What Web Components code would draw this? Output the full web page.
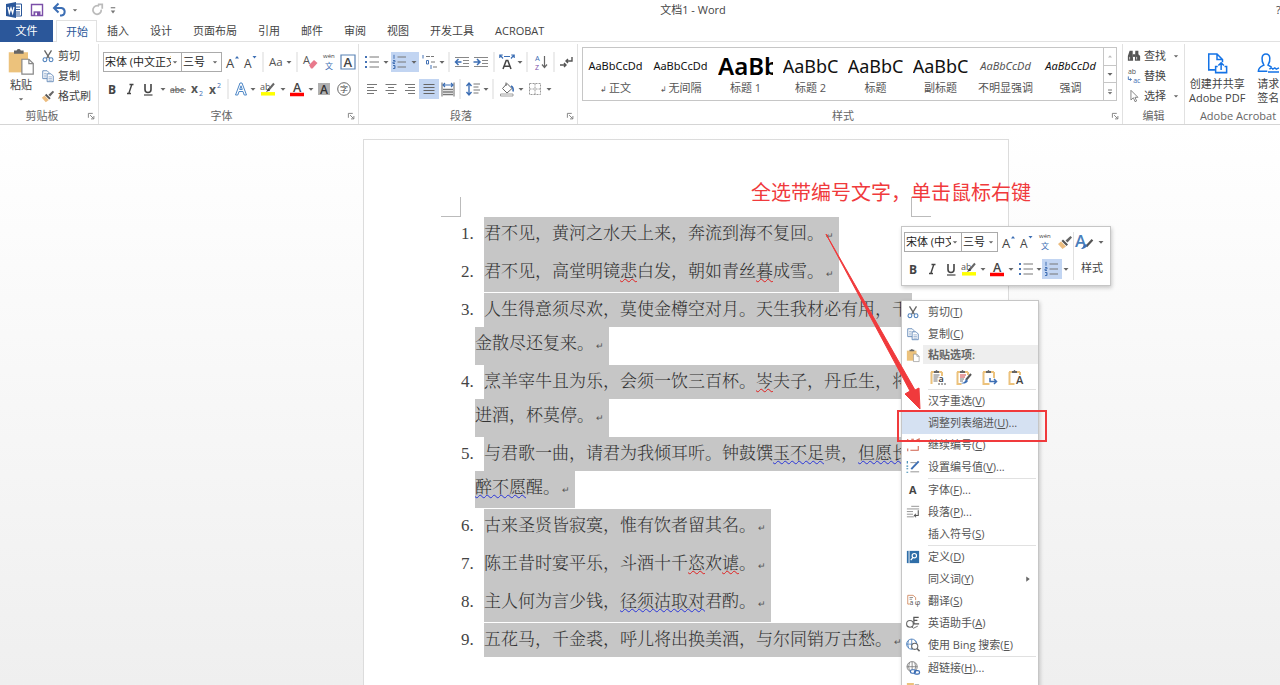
<!DOCTYPE html>
<html lang="zh-CN">
<head>
<meta charset="utf-8">
<title>文档1 - Word</title>
<style>
html,body{margin:0;height:100%}
body{font:11px/16px "Open Sans","Noto Sans CJK SC",sans-serif;color:#444;background:#fff;overflow:hidden}
</style>
</head>
<body>
<word-app></word-app>
<script>
const I={
caret:'<path d="M5.5 7h5L8 9.8z" fill="#666"/>',
sep:'<path d="M8 0v16" stroke="#e1e1e1"/>',
word:'<path d="M8 2h7.5v12H8z" fill="#fff" stroke="#2b579a"/><path d="M9 5h5M9 7.5h5M9 10h5M9 12h5" stroke="#2b579a"/><path d="M0 2l10-2v16L0 14z" fill="#2b579a"/><path d="M2 5l1.3 6L5 6l1.600 5L8 5" fill="none" stroke="#fff" stroke-width="1.300"/>',
save:'<path d="M1.700 1.700h12.600v12.600H1.700z" fill="#fff" stroke="#7b4fa8" stroke-width="1.600"/><path d="M4 9.500h8V14H4z" fill="#7b4fa8"/><path d="M6 11h2v3H6z" fill="#fff"/>',
undo:'<path d="M3 6h6.500a3.800 3.800 0 010 7.500H8" fill="none" stroke="#3c6eb4" stroke-width="2"/><path d="M6.500 1.500L2 6l4.500 4.500" fill="none" stroke="#3c6eb4" stroke-width="2"/>',
redo:'<path d="M10.500 3.500A5 5 0 108 13a5 5 0 004.800-5.500" fill="none" stroke="#bbb" stroke-width="2"/><path d="M9 1.500h5v5" fill="none" stroke="#bbb" stroke-width="2"/>',
more:'<path d="M6 6h4" stroke="#777"/><path d="M6 8.500h4L8 11z" fill="#777"/>',
paste:'<path d="M1 3h11v11.500H1z" fill="#ecc27c"/><path d="M4 3.800V2h1.500a1.300 1.300 0 012.400 0H9.500v1.800z" fill="#666"/><path d="M8.500 7h4l2.500 2.500V15.500H8.500z" fill="#fff" stroke="#888" stroke-width=".7"/><path d="M12.500 7v2.500H15" fill="none" stroke="#888" stroke-width=".7"/>',
cut:'<path d="M4 1.500l5.500 9M12 1.500L6.500 10.500" stroke="#666" stroke-width="1.500" fill="none"/><circle cx="4.500" cy="12.300" r="2.200" fill="none" stroke="#4a7ebb" stroke-width="1.200"/><circle cx="11.500" cy="12.300" r="2.200" fill="none" stroke="#4a7ebb" stroke-width="1.200"/>',
copy:'<path d="M2 2h5l2 2v7H2z" fill="#fff" stroke="#5b83b5"/><path d="M7 5.500h4.500L14 8v6.500H7z" fill="#fff" stroke="#5b83b5"/><path d="M3.500 5h3M3.500 7h2.500M3.500 9h2.500M8.500 9h4M8.500 11h4M8.500 12.800h4" stroke="#8aa5c8" stroke-width=".9"/>',
brush:'<path d="M8.500 6.500L13.500 2l1.500 1.500-4.500 5z" fill="#666"/><path d="M6 5.500l5 5-1.500 1.500-5-5z" fill="#555"/><path d="M4 7.500l5 5L5.500 15 1 10z" fill="#ecbd80"/>',
grow:'<text x="1" y="14" font-size="13" fill="#444">A</text><path d="M10 4.500L12 2l2 2.500z" fill="#3c6eb4"/>',
shrink:'<text x="1" y="14" font-size="12" fill="#444">A</text><path d="M9.500 2h4l-2 2.500z" fill="#3c6eb4"/>',
aa:'<text x="0" y="12" font-size="11.500" fill="#555">Aa</text>',
eraser:'<text x="0" y="10" font-size="11" fill="#555">A</text><path d="M6 11l5-5 3.500 3-5 5.500H8z" fill="#e8798c"/>',
wen:'<text x="2" y="4" font-size="6" fill="#444">wén</text><text x="4" y="15" font-size="8" fill="#3c6eb4">文</text>',
abox:'<path d="M1 1h14v14H1z" fill="none" stroke="#5b83b5" stroke-width="1.200"/><text x="3.500" y="13" font-size="13" font-weight="600" fill="#444">A</text>',
bold:'<text x="4" y="12.500" font-size="12" font-weight="700" fill="#444">B</text>',
italic:'<path d="M7.500 3.500h4M5 12.500h4M9.800 3.500L6.800 12.500" fill="none" stroke="#444" stroke-width="1.400"/>',
under:'<path d="M5 3v5.500q0 3 3 3t3-3V3" fill="none" stroke="#444" stroke-width="1.600"/><path d="M4 14h8.500" stroke="#444" stroke-width="1.200"/>',
strike:'<text x="0" y="12" font-size="8.500" fill="#555">abc</text><path d="M0 9h16" stroke="#555"/>',
sub:'<text x="2" y="12" font-size="12" font-weight="700" fill="#555">x</text><text x="10" y="15" font-size="7" fill="#3c6eb4">2</text>',
sup:'<text x="2" y="12.500" font-size="12" font-weight="700" fill="#555">x</text><text x="10" y="7" font-size="7" fill="#3c6eb4">2</text>',
effect:'<path d="M2.500 14L7 2h2l4.500 12h-2.300L10 10.500H6L4.800 14zM6.700 8.500h2.600L8 4.800z" fill="#fff" stroke="#4d87c7"/>',
hilite:'<text x="0" y="8.500" font-size="9" fill="#555">ab</text><path d="M14 2.500L8.500 9" stroke="#666" stroke-width="2"/><path d="M8.500 7L6 11l4-1.500z" fill="#444"/><path d="M1 12.800h14" stroke="#ff0" stroke-width="3.500"/>',
color:'<text x="4" y="11" font-size="12.500" font-weight="600" fill="#444">A</text><path d="M1 13.500h14" stroke="#f00" stroke-width="3.500"/>',
shade:'<path d="M2 2h12v12H2z" fill="#b0b0b0"/><text x="4" y="12.500" font-size="12" font-weight="600" fill="#333">A</text>',
circle:'<circle cx="8" cy="8" r="6.300" fill="none" stroke="#666"/><text x="4" y="11" font-size="8" fill="#444">字</text>',
bullets:'<path d="M1 3h2M1 8h2M1 13h2" stroke="#4573b5" stroke-width="2"/><path d="M5.500 3h9.500M5.500 8h9.500M5.500 13h9.500" stroke="#777"/>',
numbers:'<path d="M2 .8v4M1 6.500h2V8H1v1.500h2M1 11.500h2v3H1M2 13h1" fill="none" stroke="#4573b5"/><path d="M5.500 3h8.500M5.500 8h8.500M5.500 13h8.500" stroke="#777"/>',
multi:'<path d="M2 1v3.500M5.500 6.500h2V10h-2zM10 11v4" fill="none" stroke="#4573b5"/><path d="M5 2.500h4M10 2.500h3M10 8h4M12 13h4" stroke="#777"/>',
outdent:'<path d="M1 3.500h14M9 6.500h6M9 9.500h6M1 12.500h14" stroke="#888"/><path d="M7.500 8H2M4.500 5L1.500 8l3 3" fill="none" stroke="#3c6eb4" stroke-width="1.500"/>',
indent:'<path d="M1 3.500h14M9 6.500h6M9 9.500h6M1 12.500h14" stroke="#888"/><path d="M.5 8H6M4 5l3 3-3 3" fill="none" stroke="#3c6eb4" stroke-width="1.500"/>',
asian:'<path d="M4 15L7.200 6.500h1.600L12 15M5.200 12.200h5.600" fill="none" stroke="#444" stroke-width="1.500"/><path d="M1.200 1.200l2.800 3.300M14.800 1.200L12 4.500M.8 4V1h3M15.200 4V1h-3M5 2.500h6" fill="none" stroke="#3c6eb4" stroke-width="1.200"/>',
sort:'<text x="2" y="6.500" font-size="7.500" fill="#3c6eb4">A</text><text x="2" y="16" font-size="7" fill="#7b4fa8">Z</text><path d="M11.500 2v11M9 10.500l2.500 3 2.500-3" fill="none" stroke="#666" stroke-width="1.200"/>',
marks:'<path d="M14 3v4H8M10 5L8 7l2 2M2 11h6M6 9l2 2-2 2" fill="none" stroke="#555" stroke-width="1.400"/>',
left:'<path d="M3 3.500h10M3 6.500h7M3 9.500h10M3 12.500h7" stroke="#777"/>',
center:'<path d="M2.500 3.500h11M5 6.500h6M2.500 9.500h11M5 12.500h6" stroke="#777"/>',
right:'<path d="M3 3.500h10M6 6.500h7M3 9.500h10M6 12.500h7" stroke="#777"/>',
justify:'<path d="M2.500 3.500h11M2.500 6.500h11M2.500 9.500h11M2.500 12.500h11" stroke="#666"/>',
dist:'<path d="M2 1.500v14M14 1.500v14" stroke="#666"/><path d="M3 4h10M5 2L3 4l2 2M11 2l2 2-2 2" fill="none" stroke="#3c6eb4" stroke-width="1.200"/><path d="M3 8.500h10M3 11h10M3 13.500h10" stroke="#777" stroke-width="1.300"/>',
spacing:'<path d="M4 2v12M1.500 5L4 2l2.500 3M1.500 11L4 14l2.500-3" fill="none" stroke="#3c6eb4" stroke-width="1.400"/><path d="M8.500 3h6.500M8.500 6h5M8.500 9h6.500M8.500 12h5" stroke="#777"/>',
bucket:'<path d="M8 2.500l5 5-5 4.500-4.500-4.500z" fill="#fff" stroke="#666"/><path d="M7 5V1.500" stroke="#666"/><path d="M12 5c2 1 2.500 3 2 5.500" fill="none" stroke="#3c6eb4" stroke-width="1.600"/><path d="M1.500 13h12.500v2H1.500z" fill="#fff" stroke="#888" stroke-width=".8"/>',
border:'<path d="M2.500 2.500h11v11h-11zM8 2.500v11M2.500 8h11" fill="none" stroke="#999" stroke-dasharray="2 1"/>',
find:'<path d="M3 2h3.500v4L7 13.500H1V8zM9.500 2H13v4l2 2v5.500H9z" fill="#555"/><path d="M6.500 6h3v3h-3z" fill="#555"/><path d="M3 9v3M11 9v3" stroke="#ddd"/>',
replace:'<text x="1" y="6" font-size="8" fill="#555">ab</text><text x="7" y="16" font-size="8" fill="#3c6eb4">ac</text><path d="M1.500 8.500V12H5M3.500 10.500L5 12l-1.500 1.500" fill="none" stroke="#3c6eb4"/>',
select:'<path d="M4.500 1.500v11l2.800-2.500 1.900 4.500 1.800-.8-1.900-4.200h3.400z" fill="#fff" stroke="#777"/>',
pdf:'<path d="M6.500 13H2V1.500h6L12 5.500v2M8 1.500v4h4" fill="none" stroke="#1473e6" stroke-width="1.100"/><path d="M8.500 10.500H7V15h8v-4.500h-1.500M11 13V8M9 9.800l2-2 2 2" fill="none" stroke="#1473e6" stroke-width="1.100"/>',
sign:'<path d="M7.500 14H1c0-3 2-3.500 4-4.500C3 6.500 3 1.500 6.500 1.500s3.500 5 1.500 8c1 .5 2 1 2.500 1.500" fill="none" stroke="#1473e6" stroke-width="1.100"/><path d="M8 14.500h8M9 12.500l1.500-1 1 1 1.500-1 1 1 2-1" fill="none" stroke="#1473e6"/>',
launch:'<path d="M5 10V5h5" fill="none" stroke="#777"/><path d="M7 7l4 4M11.300 8v3.300H8" fill="none" stroke="#777"/>',
up:'<path d="M6 9.500h4L8 7.300z" fill="#bbb"/>',
drop:'<path d="M6 6h4" stroke="#777"/><path d="M5.800 8h4.400L8 10.500z" fill="#777"/>',
stylea:'<text x="0" y="12" font-size="15" font-weight="600" fill="#4a7ebb">A</text><path d="M15.500 6L10 12" stroke="#555" stroke-width="2"/><path d="M11 10.500c-1 3-3 4-6 3.500 2-.5 2-2.500 3.500-4z" fill="#3c6eb4"/>',
pKeep:'<path d="M1.500 3v12M1 3h11M12 3v4" fill="none" stroke="#ecc27c" stroke-width="2"/><path d="M4 4V2h1.500q1-2 2 0H9v2z" fill="#666"/><path d="M3.500 6h6M3.500 8h5M3.500 10h4M3.500 12h4" stroke="#777"/><text x="8.500" y="13" font-size="9" font-weight="600" fill="#333">a</text><path d="M8 15h8" stroke="#555" stroke-dasharray="2 1"/>',
pMerge:'<path d="M1.500 3v12h4M1 3h11M12 3v3" fill="none" stroke="#ecc27c" stroke-width="2"/><path d="M4 4V2h1.500q1-2 2 0H9v2z" fill="#666"/><path d="M4 6h6M4 8h5" stroke="#d04040"/><path d="M4 10h4M4 12h3" stroke="#777"/><path d="M15 5l-5 6" stroke="#555" stroke-width="2"/><path d="M10 10c-1 3-3 4-5 4 2 1 5 1 7-2z" fill="#3c6eb4"/>',
pLink:'<path d="M1.500 3v12h6M1 3h11M12 3v6" fill="none" stroke="#ecc27c" stroke-width="2"/><path d="M4 4V2h1.500q1-2 2 0H9v2z" fill="#666"/><path d="M8 9v3.500h6M12 10l2.500 2.500L12 15" fill="none" stroke="#3c6eb4" stroke-width="1.500"/>',
pText:'<path d="M1.500 3v12h5M1 3h11M12 3v3" fill="none" stroke="#ecc27c" stroke-width="2"/><path d="M4 4V2h1.500q1-2 2 0H9v2z" fill="#666"/><text x="8" y="15" font-size="11" font-weight="600" fill="#444">A</text>',
cont:'<path d="M2 1v3M2 12v3M5 14h9V9M6 1.500h3M11 3l4-2v3z" fill="none" stroke="#d0604c" stroke-width="1.200"/>',
setnum:'<path d="M1.500 1v3M.5 7h2M.5 10h2M.5 14h2" stroke="#3c8ab4" stroke-width="1.300"/><path d="M5 3h7M5 13.500h10" stroke="#888"/><path d="M14.500 1.500L6 10.500" stroke="#3c6eb4" stroke-width="2.200"/>',
fontA:'<text x="3.500" y="12.500" font-size="12.500" font-weight="700" fill="#444">A</text>',
para:'<path d="M6 1.500h9M1 4.500h14M1 7.500h7M1 10.500h7M1 13.500h8" stroke="#888"/><path d="M14 6v6h-4M11.500 10l-2 2 2 2" fill="none" stroke="#555" stroke-width="1.200"/>',
dict:'<path d="M1 1h14v14H1z" fill="#2f6ea8"/><path d="M3.500 1v14" stroke="#fff"/><circle cx="9.500" cy="6.500" r="2.500" fill="none" stroke="#fff" stroke-width="1.300"/><path d="M8 8.500L5.500 11.500" stroke="#fff" stroke-width="1.500"/>',
trans:'<path d="M2 1.500h6L11 4v3M2 1.500v10h2" fill="none" stroke="#d08860"/><path d="M4 4h4M4 6h3" stroke="#888"/><text x="4" y="13" font-size="8" fill="#555">a</text><text x="10" y="13" font-size="9" fill="#555">φ</text>',
english:'<circle cx="4.500" cy="9" r="3.800" fill="none" stroke="#666" stroke-width="1.200"/><path d="M14.500 1.500H9v7.500h6M9 5h4" fill="none" stroke="#555" stroke-width="1.400"/><path d="M6 12l2.500 2 5-2.500" fill="none" stroke="#666"/>',
bing:'<circle cx="6.500" cy="7" r="5.800" fill="none" stroke="#4a7ebb"/><path d="M.7 7h11M6.500 1.200v11.600M3 2.500q-2 4.500 0 9M10 2.500q2 2 2 4" fill="none" stroke="#4a7ebb" stroke-width=".9"/><circle cx="10" cy="9.500" r="3.500" fill="#fff" stroke="#666" stroke-width="1.200"/><path d="M12.500 12l3 3" stroke="#666" stroke-width="1.800"/>',
link:'<circle cx="7" cy="6.500" r="5.800" fill="none" stroke="#777"/><path d="M1 6.500h12M7 1v11M4 2q-2 4.500 0 9M10 2q2 4.500 0 9" fill="none" stroke="#777" stroke-width=".9"/><rect x="5" y="10" width="6" height="4" rx="2" fill="#fff" stroke="#3c6eb4" stroke-width="1.400"/><rect x="9.500" y="11" width="6" height="4" rx="2" fill="none" stroke="#3c6eb4" stroke-width="1.400"/>',
newc:'<path d="M1 0h8v6H1z" fill="#ecc27c"/><path d="M10 2h5" stroke="#999"/>',
sub2:'<path d="M6 5l4 3-4 3z" fill="#666"/>'
};
const icon=(n,s=16)=>`<svg width="${s}" height="${s}" viewBox="0 0 16 16" overflow="visible" aria-hidden="true">${I[n]||''}</svg>`;
const BASE=`*{box-sizing:border-box}button{font:inherit;color:inherit;background:none;border:0;padding:0;margin:0;text-align:inherit}svg{display:block;flex:none}svg text{font-family:"Open Sans","Noto Sans CJK SC",sans-serif}`;
function element(name,css,render){
  customElements.define(name,class extends HTMLElement{
    constructor(){super();this.attachShadow({mode:'open'})}
    connectedCallback(){this.shadowRoot.innerHTML=`<style>${BASE}${css}</style>`+render(this,n=>this.getAttribute(n)||'')}
  });
}

/* one icon button; "sep" draws a divider instead */
element('tool-button',`:host{display:block;height:20px;min-width:0}button,div{width:100%;height:100%;display:flex;align-items:center;justify-content:center}:host([pressed]) button{background:#c2d5f2}`,
 (e,a)=>a('icon')==='sep'?`<div>${icon('sep',20)}</div>`:`<button type="button" aria-label="${a('label')||a('icon')}">${icon(a('icon'),+a('size')||16)}</button>`);

/* a row of tools on its own column track list */
element('tool-row',`:host{display:grid;height:20px;align-items:center;justify-content:start}`,
 (e,a)=>{e.style.gridTemplateColumns=a('cols').split(' ').map(n=>n+'px').join(' ');return'<slot></slot>'});

element('font-select',`:host{display:block;position:relative;height:20px;min-width:0}
 select{appearance:none;width:100%;height:100%;border:1px solid #ababab;background:#fff;border-radius:0;font:inherit;color:#222;padding:0 10px 0 1px;margin:0}
 :host(:not([first])) select{border-left:0}
 svg{position:absolute;right:0;top:3px;pointer-events:none;width:14px;height:14px}`,
 (e,a)=>`<select aria-label="${a('label')}"><option>${a('value')}</option></select>${icon('caret')}`);

element('ribbon-group',`:host{display:flex;flex-direction:column;flex:none;border-right:1px solid #e1e1e1;height:80px;margin-top:2px}
 .c{flex:1;display:flex;flex-direction:column;gap:7px;padding:8px 0 0 4px}
 .f{display:flex;align-items:center;height:16px;color:#666}.f span{flex:1;text-align:center;white-space:nowrap}.f button{width:14px}
 :host([tight]) .c{padding-top:2px;gap:0}`,
 (e,a)=>`<div class="c"><slot></slot></div><div class="f"><span>${a('label')}</span>${e.hasAttribute('launcher')?`<button type="button" aria-label="${a('label')}设置">${icon('launch',14)}</button>`:''}</div>`);

element('text-tool',`:host{display:block}button{display:flex;align-items:center;gap:3px;height:20px;white-space:nowrap}`,
 (e,a)=>`<button type="button">${icon(a('icon'),14)}<span>${a('label')}</span>${e.hasAttribute('menu')?icon('caret',14):''}</button>`);

element('big-tool',`:host{display:block}button{display:flex;flex-direction:column;align-items:center;text-align:center;line-height:14px;white-space:nowrap;width:100%}span{margin-top:3px}`,
 (e,a)=>`<button type="button">${icon(a('icon'),+a('size')||24)}<span>${a('label').replace('|','<br>')}</span>${e.hasAttribute('menu')?icon('caret',14):''}</button>`);

element('style-card',`:host{display:block;width:65px;flex:none}
 button{display:flex;flex-direction:column;width:100%;height:52px;padding:4px 5px 0}
 b{height:28px;width:100%;display:flex;align-items:center;justify-content:center;font-weight:400;font-size:11px;color:#111;overflow:hidden;white-space:nowrap;font-family:"Noto Sans",sans-serif}
 :host([kind=h1]) b{font-size:24px;font-weight:600;justify-content:flex-start;color:#000;line-height:26px}
 :host([kind=h2]) b{font-size:18px}
 :host([kind=soft]) b{font-style:italic;color:#555}:host([kind=em]) b{font-style:italic}
 span{width:100%;text-align:center;white-space:nowrap;color:#555}small{font-size:8px;margin-right:2px}`,
 (e,a)=>`<button type="button"><b>${a('sample')}</b><span>${e.hasAttribute('mark')?'<small>↲</small>':''}${a('name')}</span></button>`);

element('title-bar',`:host{display:flex;height:20px;align-items:center}
 .q{width:120px;display:flex;align-items:center;padding-left:6px;gap:8px}.t{flex:1;text-align:center;color:#444}.h{width:14px;text-align:right;overflow:hidden;padding-left:10px}
 .q button:nth-child(4),.q button:nth-child(6){margin-left:-8px}`,
 ()=>`<div class="q">${[['word','Word',16],['save','保存',14],['undo','撤消',16],['caret','撤消选项',14],['redo','重复',14],['more','自定义',18]].map(x=>`<button type="button" aria-label="${x[1]}">${icon(x[0],x[2])}</button>`).join('')}</div><div class="t">文档1 - Word</div><button type="button" class="h">?</button>`);

element('ribbon-tabs',`:host{display:flex;height:22px;border-bottom:1px solid #e1e1e1;align-items:stretch;padding-right:10px}
 button{padding:0 11px 0 10px;line-height:20px;height:22px;white-space:nowrap}
 .file{background:#2b579a;color:#fff;width:53px;text-align:center;padding:0;margin-right:3px}
 .on{border:1px solid #e1e1e1;border-bottom:0;background:#fff;color:#2b579a;padding:0 9px;width:41px;line-height:18px}`,
 ()=>['文件','开始','插入','设计','页面布局','引用','邮件','审阅','视图','开发工具','ACROBAT'].map((t,i)=>`<button type="button" class="${['file','on'][i]||''}">${t}</button>`).join(''));

element('word-ribbon',`:host{display:flex;height:83px;border-bottom:1px solid #d5d5d5;overflow:hidden}
 .clip{width:99px}.font{width:260px}.para{width:219px}.styles{width:545px}.edit{width:62px}.acro{width:106px;border:0}
 .h{display:flex}.h>div{display:flex;flex-direction:column}
 .paste{width:34px;margin-top:1px}.cl{margin-left:3px}
 .gal{display:flex;border:1px solid #c6c6c6;height:54px;margin-top:1px;width:535px}
 .gal>div{display:flex;flex:1;overflow:hidden}.gal nav{width:13px;display:flex;flex-direction:column;border-left:1px solid #c6c6c6}
 .gal tool-button{flex:1;height:auto}.gal tool-button+tool-button{border-top:1px solid #c6c6c6}
 .acro .h{margin-top:6px}.sign{margin-left:12px}`,
 ()=>{const b=s=>s.split(' ').map(x=>x[0]==='*'?`<tool-button icon="${x.slice(1)}" pressed></tool-button>`:`<tool-button icon="${x}"></tool-button>`).join('');
 const st=[['AaBbCcDd','正文','',1],['AaBbCcDd','无间隔','',1],['AaBb','标题 1','h1'],['AaBbC','标题 2','h2'],['AaBbC','标题','h2'],['AaBbC','副标题','h2'],['AaBbCcDd','不明显强调','soft'],['AaBbCcDd','强调','em']];
 return `<ribbon-group class="clip" tight launcher label="剪贴板"><div class="h"><big-tool class="paste" icon="paste" size="28" label="粘贴" menu></big-tool><div class="cl"><text-tool icon="cut" label="剪切"></text-tool><text-tool icon="copy" label="复制"></text-tool><text-tool icon="brush" label="格式刷"></text-tool></div></div></ribbon-group>
 <ribbon-group class="font" launcher label="字体"><tool-row cols="79 40 22 14 10 18 6 10 18 18 20"><font-select first label="字体" value="宋体 (中文正文)"></font-select><font-select label="字号" value="三号"></font-select>${b('grow shrink sep aa caret sep eraser wen abox')}</tool-row><tool-row cols="18 18 18 12 18 20 16 10 16 8 22 8 20 8 18 22">${b('bold italic under caret strike sub sup sep effect caret hilite caret color caret shade circle')}</tool-row></ribbon-group>
 <ribbon-group class="para" launcher label="段落"><tool-row cols="18 10 18 10 20 6 8 18 20 6 20 6 8 20 6 18">${b('bullets caret *numbers *caret multi caret sep outdent indent sep asian caret sep sort sep marks')}</tool-row><tool-row cols="18 20 18 20 18 6 20 6 8 20 8 20 8">${b('left center right *justify dist sep spacing caret sep bucket caret border caret')}</tool-row></ribbon-group>
 <ribbon-group class="styles" tight launcher label="样式"><div class="gal"><div>${st.map(s=>`<style-card sample="${s[0]}" name="${s[1]}" kind="${s[2]}" ${s[3]?'mark':''}></style-card>`).join('')}</div><nav>${b('up caret drop')}</nav></div></ribbon-group>
 <ribbon-group class="edit" tight label="编辑"><text-tool icon="find" label="查找" menu></text-tool><text-tool icon="replace" label="替换"></text-tool><text-tool icon="select" label="选择" menu></text-tool></ribbon-group>
 <ribbon-group class="acro" tight label="Adobe Acrobat"><div class="h"><big-tool icon="pdf" size="22" label="创建并共享|Adobe PDF"></big-tool><big-tool class="sign" icon="sign" size="22" label="请求|签名"></big-tool></div></ribbon-group>`});

/* numbered paragraph: first line starts after the number, the others hang back to the list indent */
element('poem-item',`:host{display:flex;color:#333}
 .n{width:14px;flex:none;white-space:nowrap;color:#444}.b{flex:1;min-width:0;display:flex;flex-direction:column;align-items:flex-start}
 ::slotted(span){display:block;background:#c6c6c6;white-space:nowrap;height:34px;overflow:hidden;padding-right:5px}
 ::slotted(span:first-child){margin-left:9px}
 ::slotted(span:last-child){height:38px}
 :host([gap]) ::slotted(span:last-child){height:37px;margin-bottom:1px}
 :host(:last-child) ::slotted(span:last-child){height:34px}
 ::slotted(.full){align-self:stretch;padding-right:0}`,
 (e,a)=>`<div class="n">${a('n')}.</div><div class="b"><slot></slot></div>`);

element('word-page',`:host{display:block;background:#fff;border:1px solid #dcdcdc;border-bottom:0;min-height:100%;font:300 17px/34px "Liberation Serif","Noto Serif CJK SC","Noto Sans CJK SC",serif}
 .m{display:flex;justify-content:space-between;padding:57px 77px 0}.m i{width:20px;height:20px;border:solid #bbb;border-width:0 1px 1px 0}.m i+i{border-width:0 0 1px 1px}
 .l{padding:0 96px 0 97px}
 u,s{text-decoration:underline wavy #2a35d8 1px;text-underline-offset:1px}s{text-decoration-color:#e02020}
 em{font:normal 9px/20px "Noto Sans CJK SC",sans-serif;color:#555;margin-left:2px}`,
 ()=>{const P=[['君不见，黄河之水天上来，奔流到海不复回。'],['君不见，高堂明镜<s>悲</s>白发，朝如青丝<s>暮</s>成雪。'],['人生得意须尽欢，莫使金樽空对月。天生我材必有用，千','金散尽还复来。'],['烹羊宰牛且为乐，会须一饮三百杯。<s>岑</s>夫子，丹丘生，将','进酒，杯莫停。'],['与君歌一曲，请君为我倾耳听。钟鼓馔<u>玉不足</u>贵，<u>但愿长</u>','<u>醉不愿</u>醒。'],['古来圣贤皆寂寞，惟有饮者留其名。'],['陈王昔时宴平乐，斗酒十千<s>恣</s>欢<s>谑</s>。'],['主人何为言少钱，<u>径须沽取对</u>君酌。'],['五花马，千金裘，呼儿将出换美酒，与尔同销万古愁。']];
 return `<div class="m"><i></i><i></i></div><div class="l">${P.map((p,i)=>`<poem-item n="${i+1}" ${i%3===1?'gap':''}>${p.map((t,j)=>`<span${(p.length>1&&!j)||i===8?' class="full"':''}>${t}${j===p.length-1?'<em>↵</em>':''}</span>`).join('')}</poem-item>`).join('')}</div>`});

element('mini-toolbar',`:host{display:flex;background:#fff;border:1px solid #c6c6c6;box-shadow:1px 2px 4px #0003;padding:5px 0 5px 2px;width:210px;height:60px}
 .r{display:flex;flex-direction:column;gap:7px;width:170px;border-right:1px solid #e1e1e1}.s{flex:1;display:flex;flex-direction:column;align-items:center;gap:8px}.s div{display:flex}`,
 ()=>{const b=s=>s.split(' ').map(x=>x[0]==='*'?`<tool-button icon="${x.slice(1)}" pressed></tool-button>`:`<tool-button icon="${x}"></tool-button>`).join('');
 return `<div class="r"><tool-row cols="58 36 22 14 22 18"><font-select first label="字体" value="宋体 (中文正文)"></font-select><font-select label="字号" value="三号"></font-select>${b('grow shrink wen brush')}</tool-row><tool-row cols="18 20 18 18 10 18 10 20 6 20 8">${b('bold italic under hilite caret color caret bullets caret *numbers caret')}</tool-row></div><div class="s"><div><tool-button icon="stylea" size="18" label="样式"></tool-button><tool-button icon="caret" label="样式选项"></tool-button></div><span>样式</span></div>`});

element('menu-item',`:host{display:block}button{display:flex;align-items:center;width:100%;height:22px;white-space:nowrap;color:#555}
 i{width:21px;display:flex;justify-content:center;margin-right:5px;font-style:normal}span{flex:1}:host([hot]){background:#d5e1f2}
 button>svg{margin-right:3px}`,
 (e,a)=>`<button type="button" role="menuitem" aria-label="${a('label')}"><i>${a('icon')?icon(a('icon'),14):''}</i>${a('key')?`<span>${a('label')}(<u>${a('key')}</u>)${a('tail')}</span>`:''}${e.hasAttribute('more')?icon('sub2',14):''}</button>`);

element('context-menu',`:host{display:block;background:#fff;border:1px solid #c6c6c6;box-shadow:1px 2px 4px #0003;width:138px}
 hr{border:0;border-top:1px solid #e1e1e1;margin:0 2px 0 26px}
 .h{display:flex;height:19px;align-items:center;font-weight:600;color:#666}.h i{width:21px;display:flex;justify-content:center}.h span{flex:1;background:#eee;padding-left:5px;line-height:19px}
 .p{display:flex;height:25px;align-items:center;padding-left:23px}.p tool-button{width:26px}
 `,
 ()=>{const m=(i,l,k,t='',x='')=>`<menu-item icon="${i}" label="${l}" key="${k}" tail="${t}" ${x}></menu-item>`;
 return m('cut','剪切','T')+m('copy','复制','C')+`<div class="h"><i>${icon('paste',14)}</i><span>粘贴选项:</span></div><div class="p">${['pKeep','pMerge','pLink','pText'].map(x=>`<tool-button icon="${x}"></tool-button>`).join('')}</div><hr>`
 +m('','汉字重选','V')+m('','调整列表缩进','U','...','hot')+m('cont','继续编号','C')+m('setnum','设置编号值','V','...')+'<hr>'
 +m('fontA','字体','F','...')+m('para','段落','P','...')+m('','插入符号','S')+'<hr>'
 +m('dict','定义','D')+m('','同义词','Y','','more')+m('trans','翻译','S')+m('english','英语助手','A')+m('bing','使用 Bing 搜索','E')+'<hr>'
 +m('link','超链接','H','...')+m('newc','新建批注','')});

element('word-app',`:host{display:flex;flex-direction:column;height:100vh;overflow:hidden}
 main{flex:1;min-height:0;overflow:hidden;background:linear-gradient(#fff,#efefef);padding:14px 0 0 92px}
 .doc{position:relative;width:646px;height:100%;margin:0 auto}
 mini-toolbar,context-menu,.note,.box,.arrow{position:absolute}
 mini-toolbar{left:538px;top:87px}context-menu{left:538px;top:161px}
 .note{left:388px;top:40px;margin:0;font-size:20px;line-height:28px;color:#f03a3c;white-space:nowrap}
 .box{left:534px;top:271px;width:150px;height:32px;border:2px solid #f03a3c}
 .arrow{left:462px;top:94px}`,
 ()=>`<title-bar></title-bar><ribbon-tabs></ribbon-tabs><word-ribbon></word-ribbon><main><div class="doc"><word-page></word-page><mini-toolbar></mini-toolbar><context-menu></context-menu><div class="box"></div>
 <svg class="arrow" width="96" height="178" viewBox="0 0 96 178"><path d="M1 1L85 158l-5 3 15 15-1-21-4 2z" fill="#f03a3c" stroke="#f03a3c"/></svg><p class="note">全选带编号文字，单击鼠标右键</p></div></main>`);
</script>
</body>
</html>
